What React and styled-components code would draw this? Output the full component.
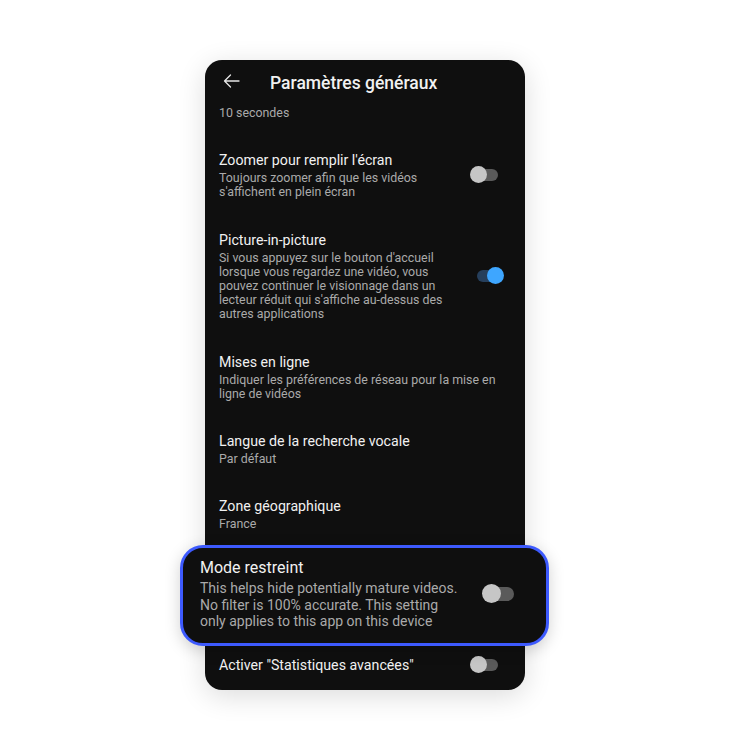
import React from "react";
import styled, { createGlobalStyle, css } from "styled-components";

const Global = createGlobalStyle`
  html, body { margin: 0; padding: 0; background: #ffffff; }
  body { font-family: Roboto, "Noto Sans", "Liberation Sans", sans-serif; -webkit-font-smoothing: antialiased; }
`;

const Page = styled.div`
  width: 750px;
  height: 750px;
  display: flex;
  justify-content: center;
  align-items: flex-start;
  padding-top: 60px;
  box-sizing: border-box;
`;

const Card = styled.div`
  width: 320px;
  margin-right: 20px;
  background: #0f0f0f;
  border-radius: 17px;
  box-shadow: 0 6px 28px rgba(0, 0, 0, 0.14);
  display: flex;
  flex-direction: column;
  color: #f1f1f1;
`;

const Header = styled.div`
  height: 46px;
  display: flex;
  align-items: center;
  padding: 0 14px 0 15px;
  gap: 28px;
`;

const BackButton = styled.div`
  width: 22px;
  height: 24px;
  display: flex;
  align-items: center;
  justify-content: center;
  margin-top: -4px;
`;

const HeaderTitle = styled.div`
  font-size: 17.5px;
  font-weight: 500;
  color: #f1f1f1;
  margin-top: -1px;
`;

const Tail = styled.div`
  padding: 0 21px 15px 14px;
  font-size: 12.4px;
  line-height: 14.2px;
  color: #aaaaaa;
`;

const Row = styled.div`
  display: flex;
  align-items: center;
  gap: 12px;
  padding: ${(p) => (p.$tight ? "9px 21px 15px 14px" : "15px 21px 15px 14px")};
`;

const TextCol = styled.div`
  flex: 1;
  min-width: 0;
`;

const Title = styled.div`
  font-size: 14.2px;
  line-height: 20px;
  color: #f1f1f1;
`;

const Sub = styled.div`
  margin-top: 1px;
  font-size: 12.4px;
  line-height: 14.2px;
  color: #aaaaaa;
`;

const Highlight = styled.div`
  margin: -1px -24px 0 -25px;
  border: 3px solid #3d5afe;
  border-radius: 23px;
  background: #0f0f0f;
  box-shadow: 0 4px 16px rgba(0, 0, 0, 0.18);
  display: flex;
  align-items: center;
  gap: 18px;
  padding: 9px 25px 13px 17px;
  position: relative;
  z-index: 1;
`;

const BigTitle = styled.div`
  font-size: 16px;
  line-height: 22px;
  color: #f1f1f1;
`;

const BigSub = styled.div`
  margin-top: 1px;
  font-size: 14px;
  line-height: 16.5px;
  color: #aaaaaa;
`;

const SwitchBox = styled.div`
  position: relative;
  flex: none;
  width: ${(p) => 34 * p.$s}px;
  height: ${(p) => 17 * p.$s}px;
`;

const Track = styled.div`
  position: absolute;
  left: ${(p) => 6.5 * p.$s}px;
  top: ${(p) => 2.5 * p.$s}px;
  width: ${(p) => 21 * p.$s}px;
  height: ${(p) => 12 * p.$s}px;
  border-radius: ${(p) => 6 * p.$s}px;
  background: ${(p) => (p.$on ? "#263f5c" : "#5a5a5a")};
`;

const Thumb = styled.div`
  position: absolute;
  top: 0;
  width: ${(p) => 17 * p.$s}px;
  height: ${(p) => 17 * p.$s}px;
  border-radius: 50%;
  ${(p) =>
    p.$on
      ? css`
          right: 0;
          background: #3ea6ff;
        `
      : css`
          left: 0;
          background: #c6c6c6;
        `}
`;

function Switch({ on = false, scale = 1 }) {
  return (
    <SwitchBox $s={scale}>
      <Track $s={scale} $on={on} />
      <Thumb $s={scale} $on={on} />
    </SwitchBox>
  );
}

function Item({ title, sub, toggle, on, tight }) {
  return (
    <Row $tight={tight}>
      <TextCol>
        <Title>{title}</Title>
        {sub && <Sub>{sub}</Sub>}
      </TextCol>
      {toggle && <Switch on={on} />}
    </Row>
  );
}

export default function App() {
  return (
    <>
      <Global />
      <Page>
        <Card>
          <Header>
            <BackButton>
              <svg width="17" height="14" viewBox="0 0 17 14" fill="none">
                <path
                  d="M16 7H1.5M7.5 1L1.5 7L7.5 13"
                  stroke="#e6e6e6"
                  strokeWidth="1.3"
                  strokeLinecap="round"
                  strokeLinejoin="round"
                />
              </svg>
            </BackButton>
            <HeaderTitle>Paramètres généraux</HeaderTitle>
          </Header>
          <Tail>10 secondes</Tail>
          <Item
            title="Zoomer pour remplir l'écran"
            sub="Toujours zoomer afin que les vidéos s'affichent en plein écran"
            toggle
          />
          <Item
            title="Picture-in-picture"
            sub="Si vous appuyez sur le bouton d'accueil lorsque vous regardez une vidéo, vous pouvez continuer le visionnage dans un lecteur réduit qui s'affiche au-dessus des autres applications"
            toggle
            on
          />
          <Item
            title="Mises en ligne"
            sub="Indiquer les préférences de réseau pour la mise en ligne de vidéos"
          />
          <Item title="Langue de la recherche vocale" sub="Par défaut" />
          <Item title="Zone géographique" sub="France" />
          <Highlight>
            <TextCol>
              <BigTitle>Mode restreint</BigTitle>
              <BigSub>
                This helps hide potentially mature videos. No filter is 100% accurate. This setting only applies to this app on this device
              </BigSub>
            </TextCol>
            <Switch scale={1.15} />
          </Highlight>
          <Item title={'Activer "Statistiques avancées"'} toggle tight />
        </Card>
      </Page>
    </>
  );
}
